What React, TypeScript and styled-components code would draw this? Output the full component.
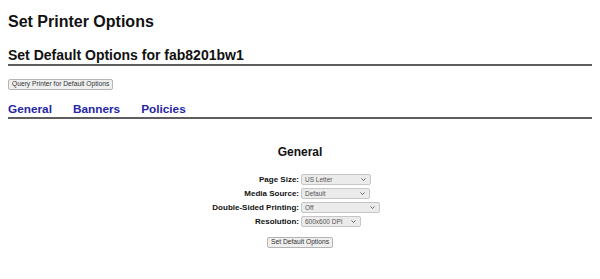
import React from 'react'
import styled, { createGlobalStyle } from 'styled-components'

const GlobalStyle = createGlobalStyle`
  html, body {
    margin: 0;
    padding: 0;
    background: #fff;
  }
  body {
    font-family: 'Liberation Sans', Arial, Helvetica, sans-serif;
    color: #111;
  }
`

interface IOption {
  label: string
  value: string
  width: number
  options: string[]
}

const fields: IOption[] = [
  { label: 'Page Size:', value: 'US Letter', width: 70, options: ['US Letter', 'US Legal', 'A4'] },
  { label: 'Media Source:', value: 'Default', width: 69, options: ['Default', 'Tray 1', 'Tray 2'] },
  {
    label: 'Double-Sided Printing:',
    value: 'Off',
    width: 79,
    options: ['Off', 'Long-Edge (Portrait)', 'Short-Edge (Landscape)'],
  },
  { label: 'Resolution:', value: '600x600 DPI', width: 60, options: ['600x600 DPI', '1200x1200 DPI'] },
]

const tabs = ['General', 'Banners', 'Policies']

const Chevron = () => (
  <svg width="5" height="3" viewBox="0 0 5 3">
    <path d="M0.5 0.5 L2.5 2.5 L4.5 0.5" fill="none" stroke="#555" strokeWidth="0.9" />
  </svg>
)

const Dropdown = ({ item }: { item: IOption }) => (
  <SelectWrap style={{ width: item.width }}>
    <Select defaultValue={item.value}>
      {item.options.map((o) => (
        <option key={o}>{o}</option>
      ))}
    </Select>
    <ChevronBox>
      <Chevron />
    </ChevronBox>
  </SelectWrap>
)

export default function App() {
  return (
    <Page>
      <GlobalStyle />
      <Title>Set Printer Options</Title>
      <SubTitle>Set Default Options for fab8201bw1</SubTitle>
      <SmallButton>Query Printer for Default Options</SmallButton>
      <Tabs>
        {tabs.map((t) => (
          <TabLink key={t} href="#">
            {t}
          </TabLink>
        ))}
      </Tabs>
      <Section>
        <SectionTitle>General</SectionTitle>
        <Form>
          {fields.map((f) => (
            <React.Fragment key={f.label}>
              <Label>{f.label}</Label>
              <Cell>
                <Dropdown item={f} />
              </Cell>
            </React.Fragment>
          ))}
        </Form>
        <SmallButton>Set Default Options</SmallButton>
      </Section>
    </Page>
  )
}

const Page = styled.div`
  padding: 0 8px;
  width: 584px;
`

const Title = styled.h1`
  margin: 13px 0 0;
  font-size: 16px;
  line-height: 18px;
  font-weight: bold;
  color: #111;
`

const SubTitle = styled.h2`
  margin: 16px 0 0;
  font-size: 14px;
  line-height: 16px;
  font-weight: bold;
  padding-bottom: 1px;
  border-bottom: 2px solid #5e5e5e;
  color: #111;
`

const SmallButton = styled.button`
  display: inline-flex;
  align-items: center;
  justify-content: center;
  margin-top: 13px;
  height: 11px;
  padding: 0 3px;
  font-family: 'Liberation Sans', Arial, sans-serif;
  font-size: 6.7px;
  line-height: 1;
  color: #333;
  background: #efefef;
  border: 1px solid #b4b4b4;
  border-radius: 2px;
`

const Tabs = styled.div`
  display: flex;
  gap: 21px;
  margin-top: 12px;
  padding-bottom: 1px;
  border-bottom: 2px solid #5e5e5e;
`

const TabLink = styled.a`
  font-size: 11.8px;
  line-height: 14px;
  font-weight: bold;
  color: #2525a6;
  text-decoration: none;
`

const Section = styled.div`
  display: flex;
  flex-direction: column;
  align-items: center;
  & > button {
    margin-top: 10px;
  }
`

const SectionTitle = styled.h2`
  margin: 26px 0 0;
  font-size: 12px;
  line-height: 14px;
  font-weight: bold;
  color: #111;
`

const Form = styled.div`
  display: grid;
  grid-template-columns: 1fr 1fr;
  row-gap: 3px;
  width: 100%;
  margin-top: 15px;
`

const Label = styled.div`
  display: flex;
  align-items: center;
  justify-content: flex-end;
  padding-right: 1px;
  font-size: 8px;
  font-weight: bold;
  color: #111;
  height: 11px;
`

const Cell = styled.div`
  display: flex;
  align-items: center;
  padding-left: 1px;
  height: 11px;
`

const SelectWrap = styled.div`
  position: relative;
  display: flex;
  height: 11px;
`

const Select = styled.select`
  appearance: none;
  -webkit-appearance: none;
  box-sizing: border-box;
  display: block;
  width: 100%;
  height: 11px;
  margin: 0;
  padding: 0 8px 0 3px;
  font-family: 'Liberation Sans', Arial, sans-serif;
  font-size: 6.5px;
  line-height: 9px;
  color: #555;
  background: #ebebeb;
  border: 1px solid #c6c6c6;
  border-radius: 2px;
  outline: none;
`

const ChevronBox = styled.span`
  position: absolute;
  right: 5px;
  top: 4px;
  display: flex;
  pointer-events: none;
`
